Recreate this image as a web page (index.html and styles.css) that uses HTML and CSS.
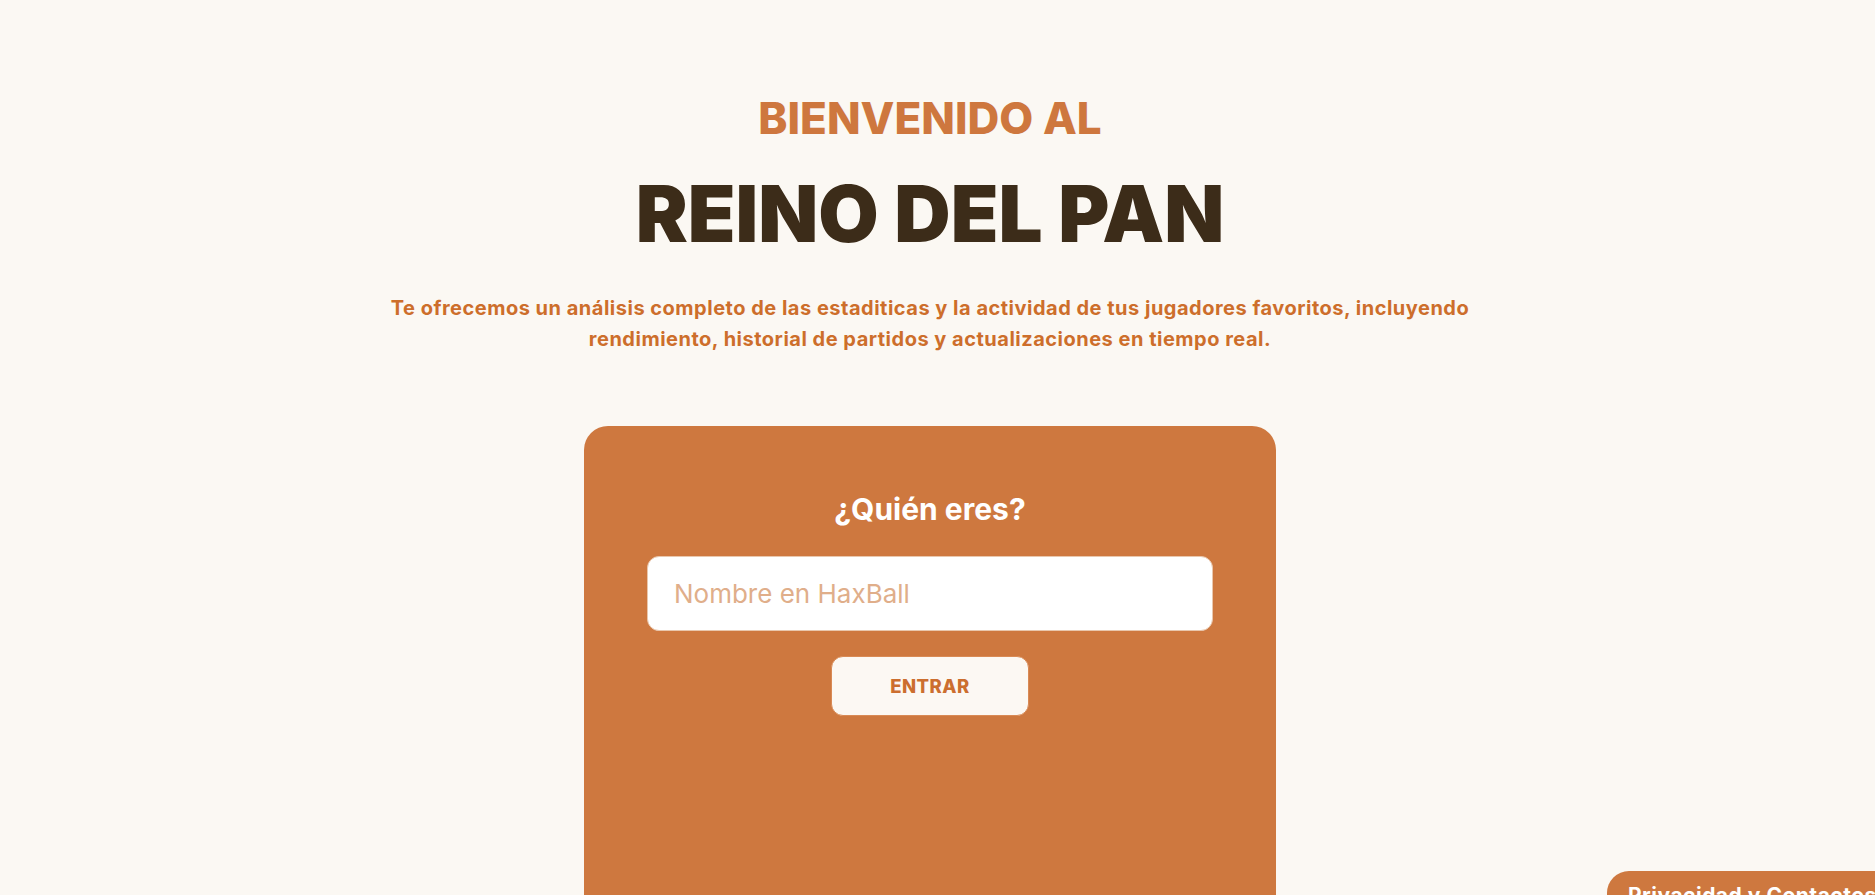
FILE: index.html
```html
<!DOCTYPE html>
<html lang="es">
<head>
<meta charset="utf-8">
<title>Reino del Pan</title>
<link rel="stylesheet" href="styles.css">
</head>
<body>
<main class="hero">
  <h2 class="hero-kicker">BIENVENIDO AL</h2>
  <h1 class="hero-title">REINO DEL PAN</h1>
  <p class="hero-text">Te ofrecemos un análisis completo de las estaditicas y la actividad de tus jugadores favoritos, incluyendo rendimiento, historial de partidos y actualizaciones en tiempo real.</p>
  <section class="login-card">
    <h3 class="login-title">¿Quién eres?</h3>
    <input class="login-input" type="text" placeholder="Nombre en HaxBall">
    <button class="login-button" type="button">ENTRAR</button>
  </section>
</main>
<a class="privacy-tab" href="#">Privacidad y Contactos</a>
</body>
</html>
```
FILE: styles.css
```css
html, body {
  margin: 0;
  padding: 0;
  background: #fbf8f3;
  height: 100%;
  overflow: hidden;
}

body {
  font-family: Inter, "Noto Sans", sans-serif;
}

.hero {
  display: flex;
  flex-direction: column;
  align-items: center;
  text-align: center;
  padding: 93px 15px 0 0;
}

.hero-kicker {
  margin: 0;
  font-size: 44px;
  line-height: 50px;
  font-weight: 800;
  color: #ce773e;
}

.hero-title {
  margin: 30px 0 0;
  font-size: 78px;
  line-height: 82px;
  font-weight: 900;
  color: #3c2c19;
}

.hero-text {
  margin: 38px 0 0;
  max-width: 1090px;
  font-size: 20px;
  line-height: 31px;
  letter-spacing: 0.5px;
  font-weight: 700;
  color: #cd6e2b;
}

.login-card {
  margin-top: 71px;
  width: 692px;
  height: 540px;
  box-sizing: border-box;
  padding: 64px 63px 0;
  background: #ce783f;
  border-radius: 24px;
  display: flex;
  flex-direction: column;
  align-items: center;
}

.login-title {
  margin: 0;
  font-size: 30px;
  line-height: 38px;
  font-weight: 700;
  color: #ffffff;
}

.login-input {
  margin-top: 28px;
  width: 100%;
  height: 75px;
  box-sizing: border-box;
  border: 1px solid #e9c7ad;
  border-radius: 12px;
  background: #ffffff;
  padding: 0 26px;
  font-family: inherit;
  font-size: 26px;
  color: #3c2c19;
  outline: none;
}

.login-input::placeholder {
  color: #e0ae8a;
}

.login-button {
  margin-top: 25px;
  width: 198px;
  height: 60px;
  border: 1px solid #d98a55;
  border-radius: 12px;
  background: #fcf8f3;
  font-family: inherit;
  font-size: 18.5px;
  letter-spacing: 0.5px;
  font-weight: 800;
  color: #cc6e2f;
  cursor: pointer;
}

.privacy-tab {
  position: fixed;
  left: 1607px;
  top: 871px;
  width: 300px;
  height: 60px;
  box-sizing: border-box;
  padding: 12px 0 0 21px;
  background: #ce783f;
  border-radius: 22px 0 0 0;
  color: #ffffff;
  font-size: 21px;
  letter-spacing: 0.5px;
  font-weight: 700;
  text-decoration: none;
  white-space: nowrap;
}
```
